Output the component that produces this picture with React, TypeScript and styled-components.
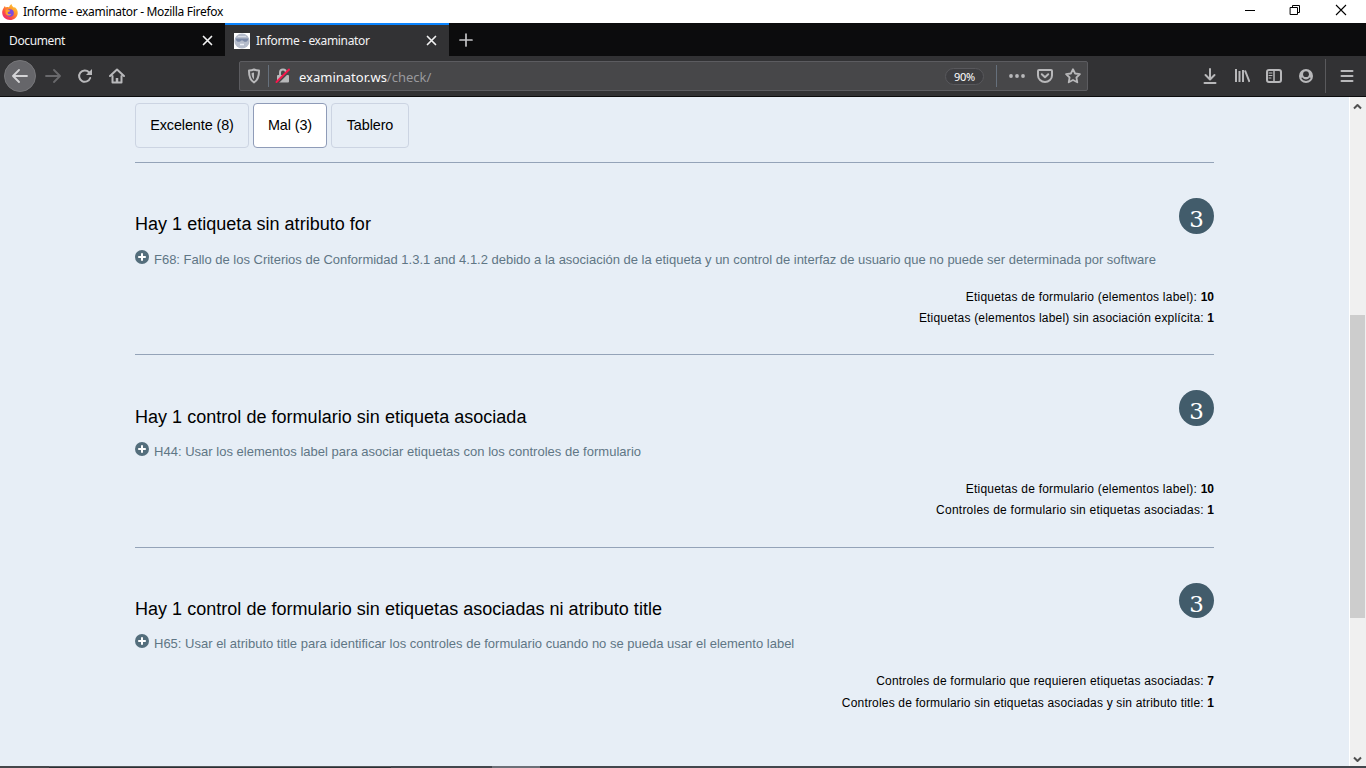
import React from "react";
import styled, { createGlobalStyle } from "styled-components";

const Global = createGlobalStyle`
  * { box-sizing: border-box; }
  html, body { margin: 0; overflow: hidden; background: #e7eef6; }
  svg { display: block; flex: none; }
  h2, p { margin: 0; }
`;
const ui = `"Noto Sans", "Open Sans", sans-serif`;

const Window = styled.div`
  width: 1366px; height: 768px; display: flex; flex-direction: column; overflow: hidden;
  font-family: "Liberation Sans", Arial, sans-serif; color: #000;
`;
const TitleBar = styled.header`
  height: 23px; flex: none; background: #fff; display: flex; align-items: center; gap: 5px; padding-left: 2px;
`;
const Label = styled.span<{ $size?: number; $color?: string; $ls?: number }>`
  font-family: ${ui}; font-size: ${p => p.$size ?? 12}px; line-height: 18px; white-space: nowrap;
  letter-spacing: ${p => p.$ls ?? 0}px; color: ${p => p.$color ?? "#000"};
`;
const Controls = styled.div`
  margin-left: auto; display: flex; height: 23px; align-items: flex-start; gap: 30px; padding: 3px 17px 0 0;
`;
const TabStrip = styled.nav`
  height: 33px; flex: none; background: #0c0c0d; display: flex; align-items: stretch;
`;
const Tab = styled.div<{ $active?: boolean; $width: number }>`
  width: ${p => p.$width}px; display: flex; align-items: center; padding: 0 12px 0 9px;
  background: ${p => (p.$active ? "#323234" : "#0c0c0d")};
  border-top: 2px solid ${p => (p.$active ? "#0a84ff" : "#0c0c0d")};
  > svg:last-child { margin-left: auto; }
`;
const Favicon = styled.span`margin-right: 6px;`;
const NewTab = styled.div`display: flex; align-items: center; padding-left: 10px;`;
const Toolbar = styled.div`
  height: 41px; flex: none; background: #323234; border-bottom: 1px solid #0c0c0d;
  display: flex; align-items: center; padding: 0 11px 0 4px;
`;
const Back = styled.div`
  width: 32px; height: 32px; border-radius: 50%; background: #66666a; border: 1px solid #77777a;
  display: flex; align-items: center; justify-content: center; margin-right: 9px;
`;
const NavIcons = styled.div`display: flex; gap: 16px; width: 194px;`;
const UrlBar = styled.div`
  width: 849px; height: 30px; border: 1px solid #5c5c60; border-radius: 2px; background: #474749;
  display: flex; align-items: center; padding: 0 6px;
`;
const Divider = styled.i<{ $h: number; $m: string; $c?: string }>`
  width: 1px; height: ${p => p.$h}px; margin: ${p => p.$m}; background: ${p => p.$c ?? "#66707c"};
`;
const Url = styled.div`flex: 1; display: flex; margin-left: 8px; padding-top: 2px;`;
const Zoom = styled.div`
  width: 39px; height: 17px; border: 1px solid #58585c; border-radius: 9px; background: #3e3e41;
  display: flex; align-items: center; justify-content: center; margin-top: 1px;
`;
const UrlActions = styled.div`display: flex; gap: 12px;`;
const Tools = styled.div`display: flex; align-items: center; gap: 16px; margin-left: auto;`;

const Viewport = styled.div`flex: 1; display: flex; min-height: 0;`;
const Page = styled.main`flex: 1; background: #e7eef6; padding: 6px 0 0 135px;`;
const Column = styled.div`width: 1079px;`;
const Filters = styled.div`display: flex; gap: 4px; height: 59px;`;
const Filter = styled.div<{ $on?: boolean; $width: number }>`
  width: ${p => p.$width}px; height: 45px; border-radius: 4px; font-size: 14.4px; line-height: 43px; text-align: center;
  letter-spacing: -0.1px; white-space: nowrap;
  border: 1px solid ${p => (p.$on ? "#8f9cb8" : "#ccd4e2")}; background: ${p => (p.$on ? "#fff" : "transparent")};
`;
const Section = styled.section<{ $height: number }>`
  height: ${p => p.$height}px; border-top: 1px solid #94a3b8; padding-top: 35px;
`;
const Head = styled.div`display: flex; justify-content: space-between; height: 36px;`;
const Title = styled.h2<{ $drop: number }>`
  font-size: 18px; font-weight: 400; line-height: 22px; padding-top: ${p => p.$drop}px;
  letter-spacing: 0.025px; white-space: nowrap;
`;
const Score = styled.div<{ $h: number }>`
  width: 35px; height: ${p => p.$h}px; border-radius: 50%; background: #425c6b; color: #fff;
  font: 23px/42px "DejaVu Serif", serif; text-align: center;
`;
const Technique = styled.p<{ $ls: number; $top: number }>`
  display: flex; gap: 5px; margin-top: ${p => p.$top}px; height: 20px; font-size: 13px; line-height: 20px; color: #5f7685;
  letter-spacing: ${p => p.$ls}px; white-space: nowrap;
`;
const Facts = styled.div`margin-top: 17px; display: flex; flex-direction: column; align-items: flex-end;`;
const Fact = styled.p<{ $ls: number; $h: number }>`
  font-size: 12px; line-height: 20px; height: ${p => p.$h}px; letter-spacing: ${p => p.$ls}px; white-space: nowrap;
  b { letter-spacing: 0; }
`;
const Scrollbar = styled.aside`
  width: 17px; background: #f0f0f0; border-left: 1px solid #fff; display: flex; flex-direction: column; align-items: center;
  padding: 6px 1px 3px 0;
`;
const Track = styled.div`flex: 1; width: 15px; padding-top: 205px;`;
const Thumb = styled.div`height: 303px; background: #cdcdcd;`;
const Edge = styled.footer`height: 2px; flex: none; display: flex; background: #43474d;`;
const EdgePart = styled.i<{ $w: number; $c: string; $top?: string }>`
  width: ${p => p.$w}px; background: ${p => p.$c}; border-top: 1px solid ${p => p.$top ?? p.$c};
`;

const Svg = ({ w = 16, h = w, c = "#b8b8ba", sw = 2, children }: { w?: number; h?: number; c?: string; sw?: number; children: React.ReactNode }) => (
  <svg width={w} height={h} viewBox={`0 0 ${w} ${h}`} fill="none" stroke={c} strokeWidth={sw} strokeLinecap="round" strokeLinejoin="round">{children}</svg>
);

const Firefox = () => (
  <svg width="16" height="16" viewBox="0 0 16 16">
    <defs>
      <linearGradient id="fire" x1="1" y1="0" x2="0.2" y2="1">
        <stop offset="0" stopColor="#ffe14a" /><stop offset=".4" stopColor="#ff9a2a" /><stop offset=".75" stopColor="#ff4a45" /><stop offset="1" stopColor="#e6257c" />
      </linearGradient>
    </defs>
    <path d="M1.5 4.2 2.8 2l1 1.6C5 3 6 3 7 3.4 7.400 2 8.200.8 9.500 0c.3 1.800 1.400 2.700 2.700 3.700l.5-.8C15 4.600 16 7 15.700 9.500 15.200 13.400 12 16 8 16S.3 13 .2 8.800C.1 7.200.6 5.600 1.500 4.200Z" fill="url(#fire)" />
    <circle cx="8" cy="9" r="3.800" fill="#7b4be0" />
    <path d="M3.500 5.800c2-.6 3.600.2 4.800 1.100-1 .9-2.200.6-2.600 1.600-.2 1.400 1.600 2.300 3.600 1.200-.7 2.400-4.800 2.700-5.700-.5Z" fill="#ffa42c" />
  </svg>
);
const Close = () => <Svg w={11} c="#f2f2f2" sw={1.7}><path d="M1.500 1.500l8 8M9.500 1.500l-8 8" /></Svg>;
const Plus = () => (
  <Svg w={14} h={15} sw={2} c="#fff"><circle cx="7" cy="7" r="7" fill="#546e7c" stroke="none" /><path d="M7 3.200v7.600M3.200 7h7.600" strokeLinecap="butt" /></Svg>
);

interface Issue {
  title: string; drop: number; height: number; score: number; technique: string; kls: number; top: number;
  facts: { text: string; value: string; ls: number; h: number }[];
}
const issues: Issue[] = [
  {
    title: "Hay 1 etiqueta sin atributo for", drop: 15, height: 192, score: 36, top: 16,
    technique: "F68: Fallo de los Criterios de Conformidad 1.3.1 and 4.1.2 debido a la asociación de la etiqueta y un control de interfaz de usuario que no puede ser determinada por software", kls: -0.011,
    facts: [
      { text: "Etiquetas de formulario (elementos label):", value: "10", ls: 0.22, h: 21 },
      { text: "Etiquetas (elementos label) sin asociación explícita:", value: "1", ls: 0.19, h: 21 },
    ],
  },
  {
    title: "Hay 1 control de formulario sin etiqueta asociada", drop: 16, height: 193, score: 36, top: 16,
    technique: "H44: Usar los elementos label para asociar etiquetas con los controles de formulario", kls: 0.018,
    facts: [
      { text: "Etiquetas de formulario (elementos label):", value: "10", ls: 0.22, h: 21 },
      { text: "Controles de formulario sin etiquetas asociadas:", value: "1", ls: 0.24, h: 21 },
    ],
  },
  {
    title: "Hay 1 control de formulario sin etiquetas asociadas ni atributo title", drop: 15, height: 192, score: 35, top: 15,
    technique: "H65: Usar el atributo title para identificar los controles de formulario cuando no se pueda usar el elemento label", kls: 0,
    facts: [
      { text: "Controles de formulario que requieren etiquetas asociadas:", value: "7", ls: 0.22, h: 22 },
      { text: "Controles de formulario sin etiquetas asociadas y sin atributo title:", value: "1", ls: 0.18, h: 21 },
    ],
  },
];

export default function App() {
  return (
    <Window>
      <Global />
      <TitleBar>
        <Firefox />
        <Label $ls={-0.31}>Informe - examinator - Mozilla Firefox</Label>
        <Controls>
          <Svg w={16} c="#000" sw={1}><path d="M4 7.500h10" strokeLinecap="butt" /></Svg>
          <Svg w={16} c="#000" sw={1}><path d="M3.500 4.500h7v7h-7zM5.500 4.500v-2h7v7h-2" strokeLinejoin="miter" /></Svg>
          <Svg w={16} c="#000" sw={1.1}><path d="M3 2l10 10M13 2L3 12" strokeLinecap="butt" /></Svg>
        </Controls>
      </TitleBar>
      <TabStrip>
        <Tab $width={225}><Label $color="#f2f2f4" $ls={-0.38}>Document</Label><Close /></Tab>
        <Tab $width={224} $active>
          <Favicon>
            <svg width="16" height="16" viewBox="0 0 16 16">
              <rect width="16" height="16" fill="#fff" /><circle cx="8" cy="8" r="7.600" fill="#b5bccb" />
              <path d="M1.500 5.500h13l-.8 2c-1 1.800-3.700 1.800-4.900 0H7.200C6 9.300 3.300 9.300 2.300 7.500Z" fill="#7a88a6" /><path d="M6 11.500h4" stroke="#e9edf4" strokeWidth="1.500" /><path d="M4 3.500h8" stroke="#d6dbe5" />
            </svg>
          </Favicon>
          <Label $color="#f2f2f4" $ls={-0.35}>Informe - examinator</Label><Close />
        </Tab>
        <NewTab><Svg w={14} c="#c4c4c6" sw={1.700}><path d="M7 1v12M1 7h12" /></Svg></NewTab>
      </TabStrip>
      <Toolbar>
        <Back><Svg c="#d4d4d6" sw={1.8}><path d="M15 8H1.500M7 2L1 8l6 6" /></Svg></Back>
        <NavIcons>
          <Svg c="#69696c" sw={1.8}><path d="M1 8h13.500M9 2l6 6-6 6" /></Svg>
          <Svg><path d="M13.200 10A5.700 5.700 0 1 1 12 4.200" /><path d="M15 1v6H9Z" fill="#b8b8ba" stroke="none" /></Svg>
          <Svg><path d="M1 8l7-6.500L15 8M3.500 8v6.500h9V8" /><path d="M8 14v-4" strokeWidth="2.500" strokeLinecap="butt" /></Svg>
        </NavIcons>
        <UrlBar>
          <Svg><path d="M8 1.500c2 .9 3.600 1 5 1 .1 5-.8 9.500-5 12-4.200-2.500-5.100-7-5-12 1.400 0 3-.1 5-1Z" /><path d="M8 4.500v7C6 9.700 5.500 7.500 5.600 5.100Z" fill="#b8b8ba" stroke="none" /></Svg>
          <Divider $h={22} $m="0 6px" />
          <Svg><path d="M5 7V4.500a3 3 0 0 1 6 0V7" /><rect x="2" y="7" width="12" height="7.500" rx="1" fill="#b8b8ba" stroke="none" /><path d="M2.700 14.800l12-12" stroke="#474749" strokeWidth="2" /><path d="M1.500 14l12.500-12.500" stroke="#f5174c" /></Svg>
          <Url><Label $size={13} $color="#f9f9fa">examinator.ws</Label><Label $size={13} $color="#9a9a9e">/check/</Label></Url>
          <Zoom><Label $size={11} $color="#fff" $ls={-0.3}>90%</Label></Zoom>
          <Divider $h={22} $m="0 12px" />
          <UrlActions>
            <Svg><g fill="#b8b8ba" stroke="none"><circle cx="2" cy="8" r="1.900" /><circle cx="8" cy="8" r="1.900" /><circle cx="14" cy="8" r="1.900" /></g></Svg>
            <Svg><path d="M2 2h12a1 1 0 0 1 1 1v4.500a7 6.500 0 0 1-14 0V3a1 1 0 0 1 1-1ZM4.800 6.200L8 9.200l3.200-3" /></Svg>
            <Svg sw={1.800}><path d="M8 1.200l2.100 4.300 4.800.7-3.500 3.300.9 4.800L8 12l-4.300 2.300.9-4.800L1.100 6.200l4.800-.7Z" /></Svg>
          </UrlActions>
        </UrlBar>
        <Tools>
          <Svg><path d="M8 1v10M3.500 7L8 11.500 12.500 7M2.500 15h11" /></Svg>
          <Svg><path d="M2 1v13M5.500 3v11M9 2v12M11 2.500l4.500 11.500" strokeLinecap="butt" /></Svg>
          <Svg><rect x="1" y="2" width="14" height="12" rx="2" /><path d="M8 2v12" strokeWidth="1.500" /><path d="M3 5h3M3 7.500h3M3 10h2" strokeWidth="1" /></Svg>
          <Svg><circle cx="8" cy="8" r="7" fill="#b8b8ba" stroke="none" /><circle cx="8" cy="6.200" r="2.900" fill="#323234" stroke="none" /><path d="M4.200 10.300c1.200 2.500 6.400 2.500 7.600 0" stroke="#323234" strokeWidth="1.500" /></Svg>
          <Divider $h={34} $m="0 -3px 0 -5px" $c="#59595c" />
          <Svg><path d="M2.500 3h11M2.500 8h11M2.500 13h11" /></Svg>
        </Tools>
      </Toolbar>
      <Viewport>
        <Page>
          <Column>
            <Filters>
              <Filter $width={114}>Excelente (8)</Filter>
              <Filter $width={74} $on>Mal (3)</Filter>
              <Filter $width={78}>Tablero</Filter>
            </Filters>
            {issues.map(i => (
              <Section key={i.title} $height={i.height}>
                <Head><Title $drop={i.drop}>{i.title}</Title><Score $h={i.score}>3</Score></Head>
                <Technique $ls={i.kls} $top={i.top}><Plus />{i.technique}</Technique>
                <Facts>
                  {i.facts.map(f => <Fact key={f.text} $ls={f.ls} $h={f.h}>{f.text} <b>{f.value}</b></Fact>)}
                </Facts>
              </Section>
            ))}
          </Column>
        </Page>
        <Scrollbar>
          <Svg w={9} h={7} c="#505050"><path d="M1 5.500l3.500-3.500 3.500 3.500" strokeLinecap="butt" /></Svg>
          <Track><Thumb /></Track>
          <Svg w={9} h={7} c="#505050"><path d="M1 1.500l3.500 3.500 3.500-3.500" strokeLinecap="butt" /></Svg>
        </Scrollbar>
      </Viewport>
      <Edge>
        <EdgePart $w={49} $c="#45474b" /><EdgePart $w={342} $c="#2b3035" $top="#54575b" />
        <EdgePart $w={101} $c="#43474d" /><EdgePart $w={48} $c="#6c7078" />
      </Edge>
    </Window>
  );
}
